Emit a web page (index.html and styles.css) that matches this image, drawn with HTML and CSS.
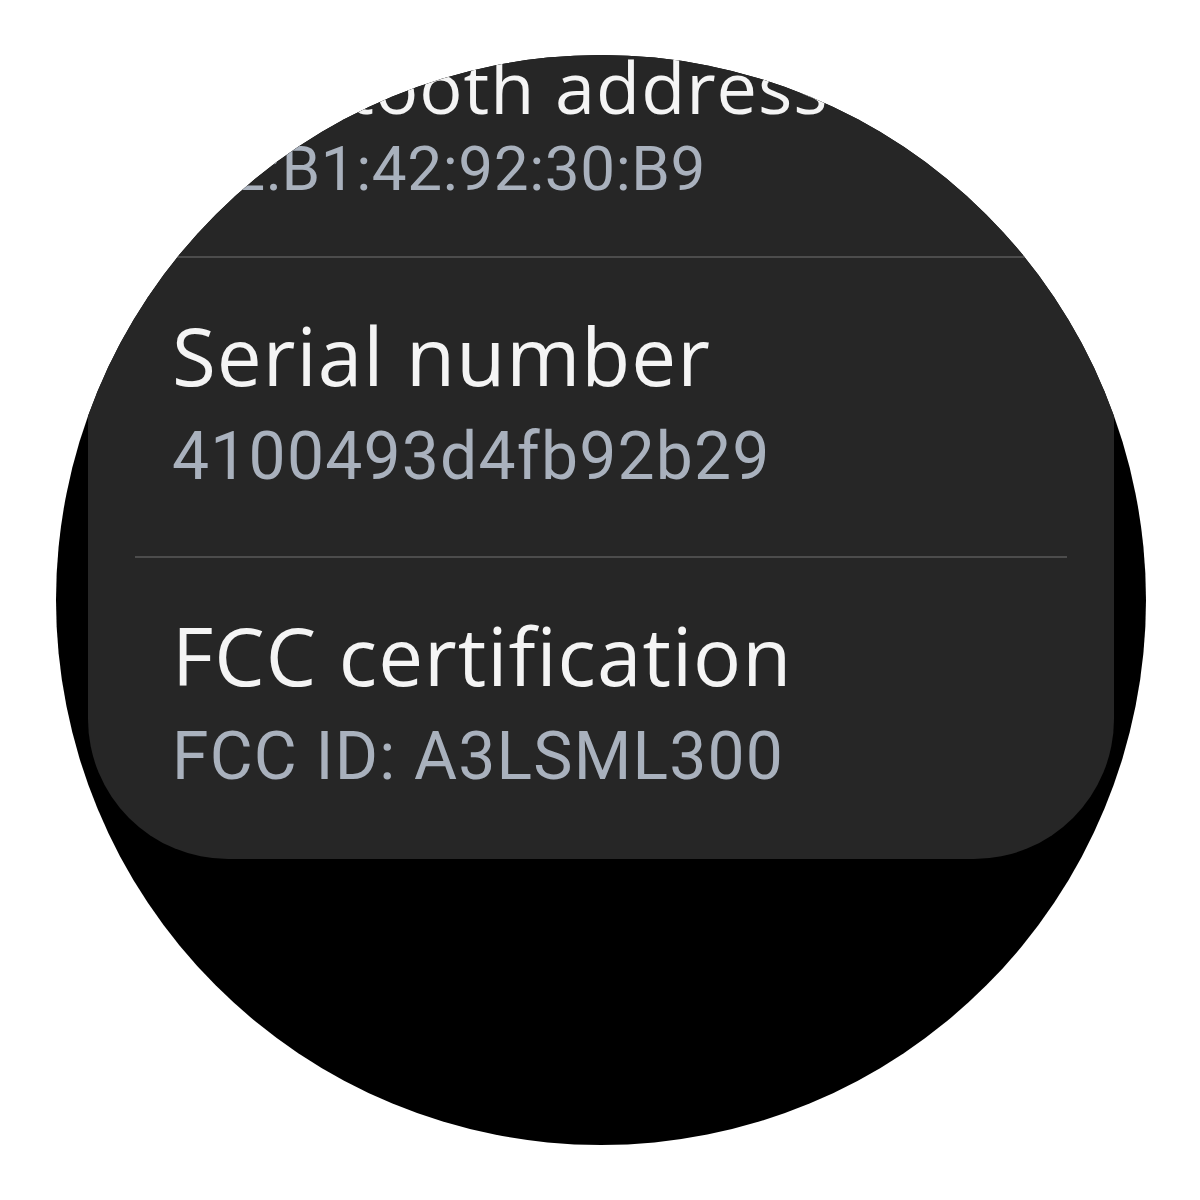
FILE: index.html
```html
<!DOCTYPE html>
<html lang="en">
<head>
    <meta charset="UTF-8">
    <meta name="viewport" content="width=device-width, initial-scale=1.0">
    <title>About watch</title>
    <link rel="stylesheet" href="styles.css">
</head>
<body>
    <div class="watch">
        <div class="list">
            <!-- item scrolled up to the top edge, drawn a bit smaller -->
            <div class="item item-edge">
                <div class="title">Bluetooth address</div>
                <div class="sub">22:B1:42:92:30:B9</div>
            </div>

            <div class="item">
                <div class="title">Serial number</div>
                <div class="sub">4100493d4fb92b29</div>
            </div>

            <div class="item item-last">
                <div class="title">FCC certification</div>
                <div class="sub">FCC ID: A3LSML300</div>
            </div>
        </div>
    </div>
</body>
</html>
```

FILE: styles.css
```css
body {
    margin: 0;
    background-color: #ffffff;
    font-family: Roboto, "Liberation Sans", sans-serif;
}
.watch {
    width: 1090px;
    height: 1090px;
    margin: 55px 0 0 56px;
    border-radius: 50%;
    overflow: hidden;
    background-color: #000000;
}
.list {
    margin: 0 32px;
    background-color: #262626;
    border-radius: 0 0 140px 140px;
}
.item {
    margin: 0 47px;
    padding: 47px 0 47px 37px;
    border-top: 2px solid #4c4c4c;
}
.title {
    font-family: "Open Sans", Roboto, sans-serif;
    font-size: 80px;
    line-height: 100px;
    letter-spacing: 1px;
    color: #f4f4f4;
}
.sub {
    font-size: 66px;
    line-height: 104px;
    color: #a9b1bd;
    letter-spacing: 1.2px;
}
.item-edge {
    border-top: none;
    padding: 0 0 35px 60px;
}
.item-edge .title {
    font-size: 72px;
    line-height: 62px;
}
.item-edge .sub {
    font-size: 62px;
    line-height: 104px;
    letter-spacing: 0.6px;
}
.item-last {
    padding-bottom: 50px;
}
```
